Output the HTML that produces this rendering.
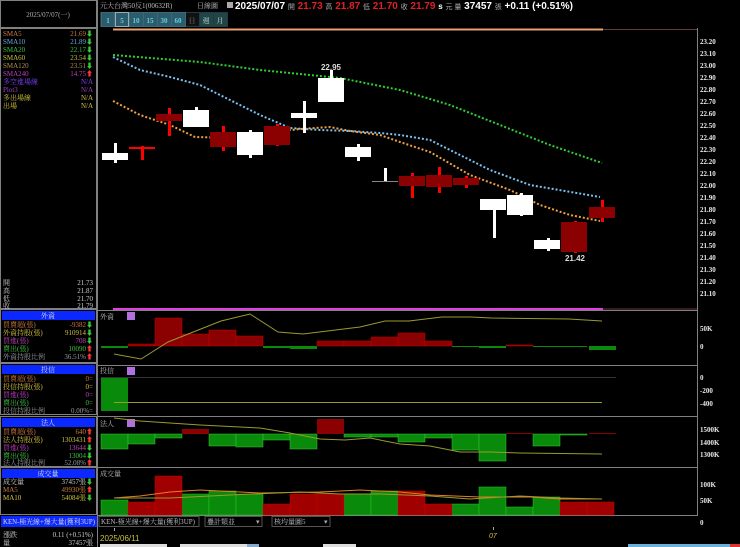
<!DOCTYPE html>
<html><head><meta charset="utf-8"><style>
html,body{margin:0;padding:0;background:#000;width:740px;height:547px;overflow:hidden}
svg{display:block}
text{font-family:"Liberation Serif","Noto Serif CJK TC",serif;font-size:7px}
.ax{font-family:"Liberation Sans",sans-serif;font-size:8px;font-weight:bold;fill:#e8e8e8}
</style></head><body>
<svg width="740" height="547" viewBox="0 0 740 547" xmlns="http://www.w3.org/2000/svg">
<rect width="740" height="547" fill="#000"/>
<g stroke="#808080" fill="none" stroke-width="1">
<rect x="0.5" y="0.5" width="96" height="27"/>
<rect x="0.5" y="28.5" width="96" height="280"/>
<rect x="0.5" y="309.5" width="96" height="53"/>
<rect x="0.5" y="363.5" width="96" height="51"/>
<rect x="0.5" y="416.5" width="96" height="50"/>
<rect x="0.5" y="467.5" width="96" height="47"/>
<line x1="97.5" y1="0" x2="97.5" y2="547"/>
<line x1="98" y1="310.5" x2="697" y2="310.5"/>
<line x1="98" y1="365.5" x2="697" y2="365.5"/>
<line x1="98" y1="416.5" x2="697" y2="416.5"/>
<line x1="98" y1="467.5" x2="697" y2="467.5"/>
<line x1="98" y1="515.5" x2="697" y2="515.5"/>
<line x1="697.5" y1="28" x2="697.5" y2="516"/>
</g>
<line x1="603" y1="29.5" x2="697" y2="29.5" stroke="#6a3a3a"/>
<line x1="113" y1="29.5" x2="603" y2="29.5" stroke="#e8a070" stroke-width="2"/>
<line x1="113" y1="309" x2="603" y2="309" stroke="#e040e0" stroke-width="2"/>
<line x1="603" y1="309" x2="697" y2="309" stroke="#6a3a3a"/>
<text x="48" y="17" fill="#b0b0b0" text-anchor="middle">2025/07/07(一)</text>
<g>
<text x="3" y="36" fill="#d07a3a">SMA5</text><text x="93" y="36" fill="#d07a3a" text-anchor="end">21.69<tspan fill="#3c3">⬇</tspan></text>
<text x="3" y="44" fill="#6aa8d8">SMA10</text><text x="93" y="44" fill="#6aa8d8" text-anchor="end">21.89<tspan fill="#3c3">⬇</tspan></text>
<text x="3" y="52" fill="#3cc03c">SMA20</text><text x="93" y="52" fill="#3cc03c" text-anchor="end">22.17<tspan fill="#3c3">⬇</tspan></text>
<text x="3" y="60" fill="#c8c040">SMA60</text><text x="93" y="60" fill="#c8c040" text-anchor="end">23.54<tspan fill="#3c3">⬇</tspan></text>
<text x="3" y="68" fill="#b09050">SMA120</text><text x="93" y="68" fill="#b09050" text-anchor="end">23.51<tspan fill="#3c3">⬇</tspan></text>
<text x="3" y="76" fill="#c040c0">SMA240</text><text x="93" y="76" fill="#c040c0" text-anchor="end">14.75<tspan fill="#f33">⬆</tspan></text>
<text x="3" y="84" fill="#8040ff">多空進場線</text><text x="93" y="84" fill="#8040ff" text-anchor="end">N/A</text>
<text x="3" y="92" fill="#a040c0">Plot3</text><text x="93" y="92" fill="#a040c0" text-anchor="end">N/A</text>
<text x="3" y="100" fill="#d0c040">多出場線</text><text x="93" y="100" fill="#d0c040" text-anchor="end">N/A</text>
<text x="3" y="108" fill="#d0c040">出場</text><text x="93" y="108" fill="#d0c040" text-anchor="end">N/A</text>
<text x="3" y="285" fill="#ccc">開</text><text x="93" y="285" fill="#ccc" text-anchor="end">21.73</text>
<text x="3" y="293" fill="#ccc">高</text><text x="93" y="293" fill="#ccc" text-anchor="end">21.87</text>
<text x="3" y="301" fill="#ccc">低</text><text x="93" y="301" fill="#ccc" text-anchor="end">21.70</text>
<text x="3" y="308" fill="#ccc">收</text><text x="93" y="308" fill="#ccc" text-anchor="end">21.79</text>
</g>
<g fill="#0a28ff">
<rect x="2" y="311" width="93" height="9"/>
<rect x="2" y="365" width="93" height="9"/>
<rect x="2" y="418" width="93" height="9"/>
<rect x="2" y="469" width="93" height="9"/>
<rect x="1" y="516" width="96" height="11"/>
</g>
<text x="48" y="318" fill="#ddd" text-anchor="middle">外資</text>
<text x="48" y="372" fill="#ddd" text-anchor="middle">投信</text>
<text x="48" y="425" fill="#ddd" text-anchor="middle">法人</text>
<text x="48" y="476" fill="#ddd" text-anchor="middle">成交量</text>
<text x="3" y="524" fill="#ddd" textLength="92" lengthAdjust="spacingAndGlyphs">KEN-極光線+爆大量(獲利3UP)</text>
<g>
<text x="3" y="327" fill="#d07a3a">買賣超(張)</text><text x="93" y="327" fill="#d07a3a" text-anchor="end">-9382<tspan fill="#3c3">⬇</tspan></text>
<text x="3" y="335" fill="#d0c040">外資持股(張)</text><text x="93" y="335" fill="#d0c040" text-anchor="end">910914<tspan fill="#3c3">⬇</tspan></text>
<text x="3" y="343" fill="#c040c0">買進(張)</text><text x="93" y="343" fill="#c040c0" text-anchor="end">708<tspan fill="#3c3">⬇</tspan></text>
<text x="3" y="351" fill="#3cc03c">賣出(張)</text><text x="93" y="351" fill="#3cc03c" text-anchor="end">10090<tspan fill="#f33">⬆</tspan></text>
<text x="3" y="359" fill="#999">外資持股比例</text><text x="93" y="359" fill="#999" text-anchor="end">36.51%<tspan fill="#f33">⬆</tspan></text>
<text x="3" y="381" fill="#d07a3a">買賣超(張)</text><text x="93" y="381" fill="#d07a3a" text-anchor="end">0=</text>
<text x="3" y="389" fill="#d0c040">投信持股(張)</text><text x="93" y="389" fill="#d0c040" text-anchor="end">0=</text>
<text x="3" y="397" fill="#c040c0">買進(張)</text><text x="93" y="397" fill="#c040c0" text-anchor="end">0=</text>
<text x="3" y="405" fill="#3cc03c">賣出(張)</text><text x="93" y="405" fill="#3cc03c" text-anchor="end">0=</text>
<text x="3" y="413" fill="#999">投信持股比例</text><text x="93" y="413" fill="#999" text-anchor="end">0.00%=</text>
<text x="3" y="434" fill="#d07a3a">買賣超(張)</text><text x="93" y="434" fill="#d07a3a" text-anchor="end">640<tspan fill="#f33">⬆</tspan></text>
<text x="3" y="442" fill="#d0c040">法人持股(張)</text><text x="93" y="442" fill="#d0c040" text-anchor="end">1303431<tspan fill="#f33">⬆</tspan></text>
<text x="3" y="450" fill="#c040c0">買進(張)</text><text x="93" y="450" fill="#c040c0" text-anchor="end">13644<tspan fill="#3c3">⬇</tspan></text>
<text x="3" y="458" fill="#3cc03c">賣出(張)</text><text x="93" y="458" fill="#3cc03c" text-anchor="end">13004<tspan fill="#3c3">⬇</tspan></text>
<text x="3" y="465" fill="#999">法人持股比例</text><text x="93" y="465" fill="#999" text-anchor="end">52.08%<tspan fill="#f33">⬆</tspan></text>
<text x="3" y="484" fill="#ccc">成交量</text><text x="93" y="484" fill="#ccc" text-anchor="end">37457張<tspan fill="#3c3">⬇</tspan></text>
<text x="3" y="492" fill="#d07a3a">MA5</text><text x="93" y="492" fill="#d07a3a" text-anchor="end">49930張<tspan fill="#f33">⬆</tspan></text>
<text x="3" y="500" fill="#d0c040">MA10</text><text x="93" y="500" fill="#d0c040" text-anchor="end">54084張<tspan fill="#3c3">⬇</tspan></text>
<text x="3" y="537" fill="#ccc">漲跌</text><text x="93" y="537" fill="#ccc" text-anchor="end">0.11 (+0.51%)</text>
<text x="3" y="545" fill="#ccc">量</text><text x="93" y="545" fill="#ccc" text-anchor="end">37457張</text>
</g>
<text x="100" y="8" fill="#bbb">元大台灣50反1(00632R)</text>
<text x="197" y="8" fill="#bbb">日線圖</text>
<rect x="227" y="2" width="6" height="6" fill="#aaa"/>
<text x="235" y="9" style="font-family:'Liberation Sans',sans-serif;font-size:10px;font-weight:bold" fill="#fff">2025/07/07 <tspan fill="#aaa" font-weight="normal" font-size="7">開</tspan> <tspan fill="#e02020">21.73</tspan> <tspan fill="#aaa" font-weight="normal" font-size="7">高</tspan> <tspan fill="#e02020">21.87</tspan> <tspan fill="#aaa" font-weight="normal" font-size="7">低</tspan> <tspan fill="#e02020">21.70</tspan> <tspan fill="#aaa" font-weight="normal" font-size="7">收</tspan> <tspan fill="#e02020">21.79</tspan> <tspan font-size="8">s</tspan> <tspan fill="#aaa" font-weight="normal" font-size="7">元 量</tspan> 37457 <tspan fill="#aaa" font-weight="normal" font-size="7">張</tspan> +0.11 (+0.51%)</text>
<rect x="100" y="12" width="128" height="15" fill="#1c3c48"/>
<g fill="#2c5c6c" stroke="#3a6a7a">
<rect x="101.5" y="12.5" width="13" height="14"/><rect x="115.5" y="12.5" width="13" height="14" stroke="#9ab"/>
<rect x="129.5" y="12.5" width="14" height="14"/><rect x="143.5" y="12.5" width="14" height="14"/>
<rect x="157.5" y="12.5" width="14" height="14"/><rect x="171.5" y="12.5" width="14" height="14"/>
</g>
<rect x="186" y="13" width="13" height="13" fill="#111"/>
<rect x="200" y="13" width="13" height="13" fill="#244"/>
<rect x="214" y="13" width="13" height="13" fill="#244"/>
<g fill="#6cd" style="font-family:'Liberation Sans',sans-serif;font-size:8px;font-weight:bold" text-anchor="middle">
<text x="108" y="23">1</text><text x="122" y="23">5</text><text x="136" y="23">10</text><text x="150" y="23">15</text><text x="164" y="23">30</text><text x="178" y="23">60</text>
<text x="192" y="23" fill="#555">日</text><text x="206" y="23" fill="#8aa">週</text><text x="220" y="23" fill="#8aa">月</text>
</g>
<g class="ax">
<text x="700" y="44">23.20</text><text x="700" y="56">23.10</text><text x="700" y="68">23.00</text><text x="700" y="80">22.90</text><text x="700" y="92">22.80</text><text x="700" y="104">22.70</text><text x="700" y="116">22.60</text><text x="700" y="128">22.50</text><text x="700" y="140">22.40</text><text x="700" y="152">22.30</text><text x="700" y="164">22.20</text><text x="700" y="176">22.10</text><text x="700" y="188">22.00</text><text x="700" y="200">21.90</text><text x="700" y="212">21.80</text><text x="700" y="224">21.70</text><text x="700" y="236">21.60</text><text x="700" y="248">21.50</text><text x="700" y="260">21.40</text><text x="700" y="272">21.30</text><text x="700" y="284">21.20</text><text x="700" y="296">21.10</text>
<text x="700" y="331">50K</text><text x="700" y="349">0</text>
<text x="700" y="380">0</text><text x="700" y="393">-200</text><text x="700" y="406">-400</text>
<text x="700" y="432">1500K</text><text x="700" y="445">1400K</text><text x="700" y="457">1300K</text>
<text x="700" y="487">100K</text><text x="700" y="503">50K</text><text x="700" y="525">0</text>
</g>
<g fill="none" stroke-width="2" stroke-dasharray="2,2">
<polyline stroke="#30d030" points="113,55 200,62 260,70 340,78 400,90 450,105 500,125 550,145 602,163"/>
<polyline stroke="#7ac0f0" points="113,57 140,70 170,77 200,85 230,100 260,115 290,128 320,130 350,131 380,133 400,135 430,140 460,155 490,170 530,185 600,197"/>
<polyline stroke="#f0a040" points="113,101 140,115 170,125 195,137 230,138 265,133 300,129 330,127 350,131 380,135 400,142 430,152 470,175 510,190 540,205 570,215 600,221"/>
</g>
<g>
<rect x="114" y="143" width="3" height="20" fill="#fff"/><rect x="102" y="153" width="26" height="7" fill="#fff"/>
<rect x="141" y="146" width="3" height="14" fill="#f00"/><rect x="129" y="147" width="26" height="2" fill="#f00"/>
<rect x="168" y="108" width="3" height="28" fill="#f00"/><rect x="156" y="114" width="26" height="7" fill="#8b0000"/>
<rect x="195" y="107" width="3" height="5" fill="#fff"/><rect x="183" y="110" width="26" height="17" fill="#fff"/>
<rect x="222" y="126" width="3" height="25" fill="#f00"/><rect x="210" y="132" width="26" height="15" fill="#8b0000"/>
<rect x="249" y="130" width="3" height="28" fill="#fff"/><rect x="237" y="132" width="26" height="23" fill="#fff"/>
<rect x="276" y="124" width="3" height="22" fill="#f00"/><rect x="264" y="126" width="26" height="19" fill="#8b0000"/>
<rect x="303" y="101" width="3" height="32" fill="#fff"/><rect x="291" y="113" width="26" height="5" fill="#fff"/>
<rect x="330" y="70" width="3" height="10" fill="#fff"/><rect x="318" y="78" width="26" height="24" fill="#fff"/>
<rect x="357" y="144" width="3" height="17" fill="#fff"/><rect x="345" y="147" width="26" height="10" fill="#fff"/>
<rect x="384" y="168" width="3" height="14" fill="#fff"/><rect x="372" y="181" width="26" height="1" fill="#888"/>
<rect x="411" y="173" width="3" height="25" fill="#f00"/><rect x="399" y="176" width="26" height="10" fill="#8b0000"/>
<rect x="438" y="167" width="3" height="26" fill="#f00"/><rect x="426" y="175" width="26" height="12" fill="#8b0000"/>
<rect x="465" y="176" width="3" height="12" fill="#f00"/><rect x="453" y="178" width="26" height="7" fill="#8b0000"/>
<rect x="493" y="199" width="3" height="39" fill="#fff"/><rect x="480" y="199" width="26" height="11" fill="#fff"/>
<rect x="520" y="193" width="3" height="23" fill="#fff"/><rect x="507" y="195" width="26" height="20" fill="#fff"/>
<rect x="547" y="238" width="3" height="13" fill="#fff"/><rect x="534" y="240" width="26" height="9" fill="#fff"/>
<rect x="574" y="221" width="3" height="32" fill="#f00"/><rect x="561" y="222" width="26" height="30" fill="#8b0000"/>
<rect x="601" y="200" width="3" height="22" fill="#f00"/><rect x="589" y="207" width="26" height="11" fill="#8b0000"/>
</g>
<text x="331" y="70" class="ax" text-anchor="middle" style="fill:#ddd">22.95</text>
<text x="575" y="261" class="ax" text-anchor="middle" style="fill:#ddd">21.42</text>
<text x="100" y="319" fill="#bbb">外資</text><rect x="127" y="312" width="8" height="8" fill="#b070e0"/>
<g fill="#8b0000" stroke="#c00" stroke-width="0.5">
<rect x="128" y="344" width="27" height="2"/><rect x="155" y="318" width="27" height="28"/><rect x="182" y="334" width="27" height="12"/><rect x="209" y="330" width="27" height="16"/><rect x="236" y="336" width="27" height="10"/><rect x="317" y="341" width="27" height="5"/><rect x="344" y="341" width="27" height="5"/><rect x="371" y="337" width="27" height="9"/><rect x="398" y="333" width="27" height="13"/><rect x="425" y="341" width="27" height="5"/><rect x="506" y="345" width="27" height="1"/>
</g>
<g fill="#0a8a0a">
<rect x="101" y="346" width="27" height="2"/><rect x="263" y="346" width="27" height="2"/><rect x="290" y="346" width="27" height="3"/><rect x="452" y="346" width="27" height="1"/><rect x="479" y="346" width="27" height="2"/><rect x="533" y="346" width="27" height="1"/><rect x="560" y="346" width="27" height="1"/><rect x="589" y="346" width="27" height="4"/>
</g>
<polyline fill="none" stroke="#9a9a30" stroke-width="1" points="114,354 141,359 168,342 221,321 250,314 278,332 303,334 360,327 385,321 409,321 442,317 471,317 491,318 569,319 602,321"/>
<text x="100" y="373" fill="#bbb">投信</text><rect x="127" y="367" width="8" height="8" fill="#b070e0"/>
<line x1="101" y1="377.5" x2="616" y2="377.5" stroke="#333"/>
<rect x="101" y="378" width="27" height="33" fill="#0a8a0a"/>
<line x1="114" y1="402.5" x2="602" y2="402.5" stroke="#9a9a30"/>
<text x="100" y="426" fill="#bbb">法人</text><rect x="127" y="419" width="8" height="8" fill="#b070e0"/>
<g fill="#0a8a0a" stroke="#3c3" stroke-width="0.5">
<rect x="101" y="434" width="27" height="15"/><rect x="128" y="434" width="27" height="10"/><rect x="155" y="434" width="27" height="4"/><rect x="209" y="434" width="27" height="12"/><rect x="236" y="434" width="27" height="13"/><rect x="263" y="434" width="27" height="6"/><rect x="290" y="434" width="27" height="15"/><rect x="344" y="434" width="27" height="3"/><rect x="371" y="434" width="27" height="3"/><rect x="398" y="434" width="27" height="8"/><rect x="425" y="434" width="27" height="4"/><rect x="452" y="434" width="27" height="16"/><rect x="479" y="434" width="27" height="27"/><rect x="533" y="434" width="27" height="12"/><rect x="560" y="434" width="27" height="1"/>
</g>
<g fill="#8b0000"><rect x="182" y="429" width="27" height="5"/><rect x="317" y="419" width="27" height="15"/><rect x="506" y="433" width="27" height="1"/><rect x="589" y="433" width="27" height="1"/></g>
<polyline fill="none" stroke="#9a9a30" points="114,418 140,421 200,425 260,428 290,433 320,439 345,440 370,438 400,444 430,446 460,452 490,452 520,453 602,454"/>
<text x="100" y="476" fill="#bbb">成交量</text>
<g fill="#0a8a0a" stroke="#2c2" stroke-width="0.5">
<rect x="101" y="500" width="27" height="15"/><rect x="182" y="494" width="27" height="21"/><rect x="209" y="491" width="27" height="24"/><rect x="236" y="494" width="27" height="21"/><rect x="344" y="494" width="27" height="21"/><rect x="371" y="491" width="27" height="24"/><rect x="452" y="504" width="27" height="11"/><rect x="479" y="487" width="27" height="28"/><rect x="506" y="507" width="27" height="8"/><rect x="533" y="497" width="27" height="18"/>
</g>
<g fill="#a00000" stroke="#c00" stroke-width="0.5">
<rect x="128" y="502" width="27" height="13"/><rect x="155" y="476" width="27" height="39"/><rect x="263" y="504" width="27" height="11"/><rect x="290" y="494" width="27" height="21"/><rect x="317" y="494" width="27" height="21"/><rect x="398" y="491" width="27" height="24"/><rect x="425" y="504" width="27" height="11"/><rect x="560" y="502" width="27" height="13"/><rect x="587" y="502" width="27" height="13"/>
</g>
<polyline fill="none" stroke="#e08020" points="114,498 140,496 170,492 200,490 260,493 320,492 360,490 400,492 430,495 480,497 530,497 560,499 602,499"/>
<polyline fill="none" stroke="#9a9a30" points="114,498 170,498 230,495 300,492 340,494 380,494 430,496 470,499 520,496 560,498 602,499"/>
<rect x="99" y="516.5" width="100" height="10" fill="#000" stroke="#555"/>
<text x="101" y="524" fill="#bbb" textLength="94" lengthAdjust="spacingAndGlyphs">KEN-極光線+爆大量(獲利3UP)</text>
<rect x="205" y="516.5" width="57" height="10" fill="#000" stroke="#555"/><text x="207" y="524" fill="#bbb">疊計類並</text><text x="256" y="524" fill="#aaa">▾</text>
<rect x="272" y="516.5" width="58" height="10" fill="#000" stroke="#555"/><text x="274" y="524" fill="#bbb">核均量圖5</text><text x="324" y="524" fill="#aaa">▾</text>
<line x1="114.5" y1="528" x2="114.5" y2="531" stroke="#aaa"/>
<line x1="493.5" y1="527" x2="493.5" y2="530" stroke="#aaa"/>
<text x="100" y="541" fill="#c8c040" style="font-family:'Liberation Sans',sans-serif;font-size:8px">2025/06/11</text>
<text x="489" y="538" fill="#c8c040" style="font-family:'Liberation Sans',sans-serif;font-size:7px;font-style:italic">07</text>
<rect x="100" y="544" width="67" height="4" fill="#ddd"/><rect x="180" y="544" width="67" height="4" fill="#ddd"/><rect x="247" y="544" width="12" height="4" fill="#8ac"/>
<rect x="323" y="544" width="33" height="4" fill="#ddd"/>
<rect x="628" y="544" width="112" height="4" fill="#6ab0d8"/><rect x="730" y="544" width="10" height="4" fill="#d33"/>
</svg>
</body></html>
